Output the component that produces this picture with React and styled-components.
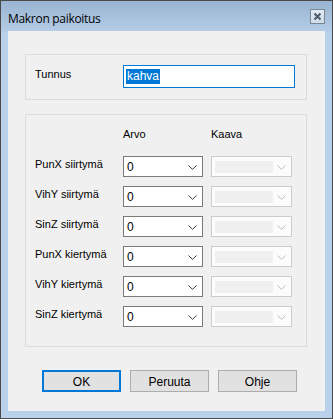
import React from 'react';
import styled, { createGlobalStyle } from 'styled-components';

const GlobalStyle = createGlobalStyle`
  html, body {
    margin: 0;
    padding: 0;
    background: #ffffff;
  }
  body {
    font-family: 'Liberation Sans', Arial, sans-serif;
    font-size: 11px;
    color: #000;
  }
`;

const Window = styled.div`
  box-sizing: border-box;
  width: 333px;
  height: 419px;
  border: 1px solid #4a4a4a;
  background: linear-gradient(to bottom, #99b4d1 0px, #b4cce6 30px, #b9d1ea 31px);
  display: flex;
  flex-direction: column;
  padding: 0 7px 7px 7px;
`;

const TitleBar = styled.div`
  height: 30px;
  flex-shrink: 0;
  display: flex;
  align-items: flex-start;
  justify-content: space-between;
`;

const Title = styled.div`
  font-family: 'Open Sans', 'Noto Sans', sans-serif;
  font-size: 12px;
  color: #000;
  margin-top: 11px;
  line-height: 14px;
  letter-spacing: -0.3px;
`;

const CloseButton = styled.div`
  box-sizing: border-box;
  width: 15px;
  height: 15px;
  margin-top: 8px;
  border: 1px solid #7a8797;
  background: linear-gradient(to bottom, #e3ebf4, #cfdbe8);
  display: flex;
  align-items: center;
  justify-content: center;
`;

const Client = styled.div`
  flex: 1;
  background: #f0f0f0;
  padding: 23px 18px 0 17px;
  display: flex;
  flex-direction: column;
`;

const GroupBox = styled.div`
  box-sizing: border-box;
  border: 1px solid #dcdcdc;
  height: ${(p) => p.$height}px;
  margin-bottom: ${(p) => p.$gap || 0}px;
  padding: ${(p) => p.$pad};
`;

const NameRow = styled.div`
  display: flex;
  align-items: flex-start;
`;

const Label = styled.div`
  width: ${(p) => p.$width || 80}px;
  flex-shrink: 0;
  line-height: 13px;
  padding-top: ${(p) => p.$top || 0}px;
  white-space: nowrap;
`;

const TextBox = styled.div`
  box-sizing: border-box;
  width: 172px;
  height: 23px;
  border: 1px solid #0078d7;
  background: #fff;
  padding: 2px 2px;
  display: flex;
  align-items: center;
`;

const Selected = styled.span`
  background: #0078d7;
  color: #fff;
  font-size: 12px;
  line-height: 15px;
  padding: 0 1px;
`;

const Grid = styled.div`
  display: grid;
  grid-template-columns: 80px 80px 81px;
  column-gap: 8px;
  row-gap: 9px;
`;

const Header = styled.div`
  grid-column: ${(p) => p.$col};
  line-height: 13px;
  height: 19px;
`;

const Combo = styled.div`
  box-sizing: border-box;
  height: 21px;
  border: 1px solid ${(p) => (p.$disabled ? '#cccccc' : '#7a7a7a')};
  background: ${(p) => (p.$disabled ? '#fcfcfc' : '#ffffff')};
  display: flex;
  align-items: center;
  padding: ${(p) => (p.$disabled ? '4px 3px 3px 3px' : '0 3px 0 3px')};
`;

const ComboText = styled.div`
  flex: 1;
  font-size: 12px;
  line-height: 15px;
  padding-top: 2px;
`;

const DisabledField = styled.div`
  flex: 1;
  align-self: stretch;
  background: #f0f0f0;
  margin-right: 4px;
`;

const Arrow = styled.svg`
  width: 9px;
  height: 5px;
  margin-right: 2px;
  margin-top: 1px;
`;

const Buttons = styled.div`
  display: flex;
  gap: 9px;
  margin-top: 23px;
  padding-left: 17px;
`;

const Button = styled.div`
  box-sizing: border-box;
  width: 79px;
  height: 22px;
  background: #e1e1e1;
  border: ${(p) => (p.$default ? '2px solid #0078d7' : '1px solid #adadad')};
  display: flex;
  align-items: center;
  justify-content: center;
  font-size: 12px;
  padding-top: 1px;
`;

const Chevron = ({ disabled }) => (
  <Arrow viewBox="0 0 9 5">
    <path d="M0.5 0.5 L4.5 4.3 L8.5 0.5" fill="none" stroke={disabled ? '#bdbdbd' : '#3c3c3c'} strokeWidth="1" />
  </Arrow>
);

const rows = ['PunX siirtymä', 'VihY siirtymä', 'SinZ siirtymä', 'PunX kiertymä', 'VihY kiertymä', 'SinZ kiertymä'];

export default function App() {
  return (
    <>
      <GlobalStyle />
      <Window>
        <TitleBar>
          <Title>Makron paikoitus</Title>
          <CloseButton>
            <svg width="9" height="9" viewBox="0 0 9 9">
              <path d="M1.5 1.5 L7.5 7.5 M7.5 1.5 L1.5 7.5" stroke="#4d5a6a" strokeWidth="2" />
            </svg>
          </CloseButton>
        </TitleBar>
        <Client>
          <GroupBox $height={46} $gap={14} $pad="10px 0 0 9px">
            <NameRow>
              <Label $width={88} $top={3}>Tunnus</Label>
              <TextBox>
                <Selected>kahva</Selected>
              </TextBox>
            </NameRow>
          </GroupBox>
          <GroupBox $height={233} $pad="13px 0 0 9px">
            <Grid>
              <Header $col={2}>Arvo</Header>
              <Header $col={3}>Kaava</Header>
              {rows.map((r) => (
                <React.Fragment key={r}>
                  <Label $top={2}>{r}</Label>
                  <Combo>
                    <ComboText>0</ComboText>
                    <Chevron />
                  </Combo>
                  <Combo $disabled>
                    <DisabledField />
                    <Chevron disabled />
                  </Combo>
                </React.Fragment>
              ))}
            </Grid>
          </GroupBox>
          <Buttons>
            <Button $default>OK</Button>
            <Button>Peruuta</Button>
            <Button>Ohje</Button>
          </Buttons>
        </Client>
      </Window>
    </>
  );
}
